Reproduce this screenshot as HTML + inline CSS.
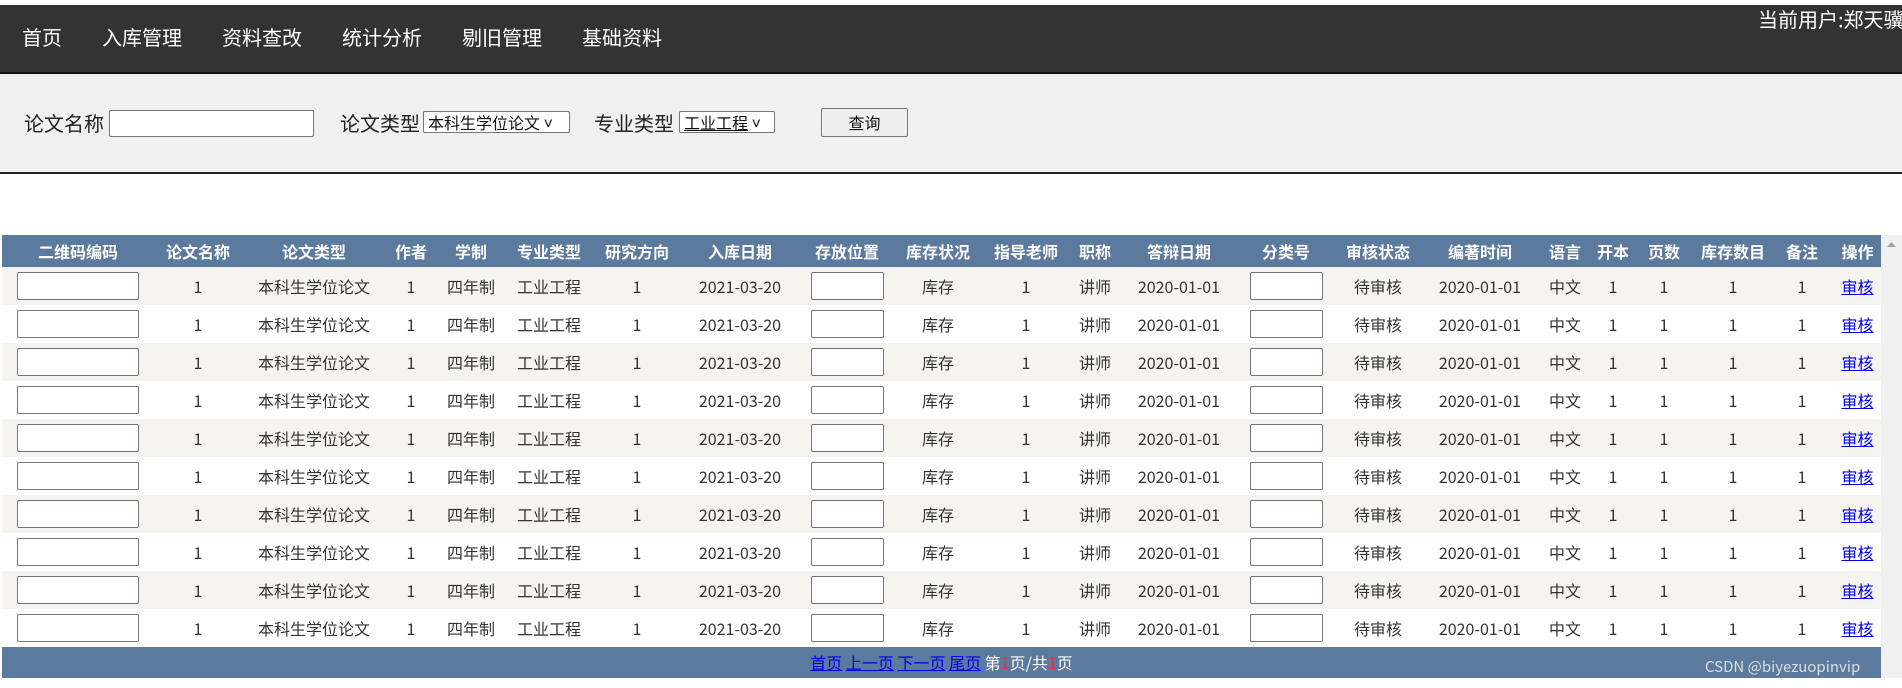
<!DOCTYPE html>
<html><head><meta charset="utf-8">
<style>
*{box-sizing:border-box}
body{margin:0;width:1902px;height:688px;overflow:hidden;background:#fff;font-family:"Noto Sans CJK SC","Liberation Sans",sans-serif;color:#333;position:relative}
.nav{position:absolute;left:0;top:5px;width:1902px;height:69px;background:#333;border-bottom:2px solid #111}
.nav span{position:absolute;top:19px;font-size:20px;color:#fff;line-height:26px}
.user{position:absolute;left:1758px;top:4px;font-size:20px;color:#fff;white-space:nowrap;line-height:30px}
.filter{position:absolute;left:0;top:74px;width:1902px;height:100px;background:#f0f0f0;border-bottom:2px solid #222}
.filter .l{position:absolute;top:35px;font-size:20px;color:#222;line-height:28px}
.inp{position:absolute;background:#fff;border:1px solid #767676;border-radius:2px}
.sel{position:absolute;background:#fff;border:1px solid #767676;border-radius:2px;font-size:16px;line-height:20px;padding-left:4px;color:#111;white-space:nowrap;overflow:hidden}
.btn{position:absolute;left:821px;top:34px;width:87px;height:29px;border:1px solid #767676;border-radius:2px;background:#efefef;font-size:16px;text-align:center;line-height:27px;color:#111}
table{position:absolute;left:2px;top:235px;width:1879px;border-collapse:collapse;table-layout:fixed}
th{background:#5b7a9d;color:#fff;font-weight:bold;font-size:16px;height:32px;padding:0;white-space:nowrap;text-align:center;line-height:20px}
td{height:38px;padding:0;text-align:center;font-size:16px;color:#333;white-space:nowrap;line-height:20px}
tr.g td{background:#f5f4f0}
td .b{display:inline-block;vertical-align:middle;border:1px solid #767676;border-radius:2px;background:#fff;height:28px}
a{color:#0000ee;text-decoration:underline}
.pg{position:absolute;left:2px;top:647px;width:1879px;height:31px;background:#5b7a9d;text-align:center;font-size:16px;line-height:31px;color:#fff}
.pg a{color:#0000ee}
.pg i{font-style:normal;color:#e33}
.sb{position:absolute;left:1881px;top:235px;width:21px;height:443px;background:#f0f0f0}
.wm{position:absolute;left:1705px;top:657px;font-size:15px;color:#ddd;line-height:20px}
</style></head><body>
<div class="nav">
<span style="left:22px">首页</span><span style="left:102px">入库管理</span><span style="left:222px">资料查改</span><span style="left:342px">统计分析</span><span style="left:462px">剔旧管理</span><span style="left:582px">基础资料</span>
</div>
<div class="user">当前用户:郑天骥</div>
<div class="filter">
<span class="l" style="left:24px">论文名称</span><div class="inp" style="left:109px;top:36px;width:205px;height:27px"></div>
<span class="l" style="left:340px">论文类型</span><div class="sel" style="left:423px;top:37px;width:147px;height:22px">本科生学位论文 ˅</div>
<span class="l" style="left:594px">专业类型</span><div class="sel" style="left:679px;top:37px;width:96px;height:22px"><u>工业工程</u> ˅</div>
<div class="btn">查询</div>
</div>
<table>
<colgroup><col style="width:152px"><col style="width:88px"><col style="width:144px"><col style="width:50px"><col style="width:70px"><col style="width:86px"><col style="width:90px"><col style="width:116px"><col style="width:98px"><col style="width:84px"><col style="width:92px"><col style="width:46px"><col style="width:122px"><col style="width:92px"><col style="width:92px"><col style="width:112px"><col style="width:58px"><col style="width:38px"><col style="width:64px"><col style="width:74px"><col style="width:64px"><col style="width:47px"></colgroup>
<tr><th>二维码编码</th><th>论文名称</th><th>论文类型</th><th>作者</th><th>学制</th><th>专业类型</th><th>研究方向</th><th>入库日期</th><th>存放位置</th><th>库存状况</th><th>指导老师</th><th>职称</th><th>答辩日期</th><th>分类号</th><th>审核状态</th><th>编著时间</th><th>语言</th><th>开本</th><th>页数</th><th>库存数目</th><th>备注</th><th>操作</th></tr>
<tr class="g"><td><span class="b" style="width:122px"></span></td><td>1</td><td>本科生学位论文</td><td>1</td><td>四年制</td><td>工业工程</td><td>1</td><td>2021-03-20</td><td><span class="b" style="width:73px"></span></td><td>库存</td><td>1</td><td>讲师</td><td>2020-01-01</td><td><span class="b" style="width:73px"></span></td><td>待审核</td><td>2020-01-01</td><td>中文</td><td>1</td><td>1</td><td>1</td><td>1</td><td><a>审核</a></td></tr>
<tr><td><span class="b" style="width:122px"></span></td><td>1</td><td>本科生学位论文</td><td>1</td><td>四年制</td><td>工业工程</td><td>1</td><td>2021-03-20</td><td><span class="b" style="width:73px"></span></td><td>库存</td><td>1</td><td>讲师</td><td>2020-01-01</td><td><span class="b" style="width:73px"></span></td><td>待审核</td><td>2020-01-01</td><td>中文</td><td>1</td><td>1</td><td>1</td><td>1</td><td><a>审核</a></td></tr>
<tr class="g"><td><span class="b" style="width:122px"></span></td><td>1</td><td>本科生学位论文</td><td>1</td><td>四年制</td><td>工业工程</td><td>1</td><td>2021-03-20</td><td><span class="b" style="width:73px"></span></td><td>库存</td><td>1</td><td>讲师</td><td>2020-01-01</td><td><span class="b" style="width:73px"></span></td><td>待审核</td><td>2020-01-01</td><td>中文</td><td>1</td><td>1</td><td>1</td><td>1</td><td><a>审核</a></td></tr>
<tr><td><span class="b" style="width:122px"></span></td><td>1</td><td>本科生学位论文</td><td>1</td><td>四年制</td><td>工业工程</td><td>1</td><td>2021-03-20</td><td><span class="b" style="width:73px"></span></td><td>库存</td><td>1</td><td>讲师</td><td>2020-01-01</td><td><span class="b" style="width:73px"></span></td><td>待审核</td><td>2020-01-01</td><td>中文</td><td>1</td><td>1</td><td>1</td><td>1</td><td><a>审核</a></td></tr>
<tr class="g"><td><span class="b" style="width:122px"></span></td><td>1</td><td>本科生学位论文</td><td>1</td><td>四年制</td><td>工业工程</td><td>1</td><td>2021-03-20</td><td><span class="b" style="width:73px"></span></td><td>库存</td><td>1</td><td>讲师</td><td>2020-01-01</td><td><span class="b" style="width:73px"></span></td><td>待审核</td><td>2020-01-01</td><td>中文</td><td>1</td><td>1</td><td>1</td><td>1</td><td><a>审核</a></td></tr>
<tr><td><span class="b" style="width:122px"></span></td><td>1</td><td>本科生学位论文</td><td>1</td><td>四年制</td><td>工业工程</td><td>1</td><td>2021-03-20</td><td><span class="b" style="width:73px"></span></td><td>库存</td><td>1</td><td>讲师</td><td>2020-01-01</td><td><span class="b" style="width:73px"></span></td><td>待审核</td><td>2020-01-01</td><td>中文</td><td>1</td><td>1</td><td>1</td><td>1</td><td><a>审核</a></td></tr>
<tr class="g"><td><span class="b" style="width:122px"></span></td><td>1</td><td>本科生学位论文</td><td>1</td><td>四年制</td><td>工业工程</td><td>1</td><td>2021-03-20</td><td><span class="b" style="width:73px"></span></td><td>库存</td><td>1</td><td>讲师</td><td>2020-01-01</td><td><span class="b" style="width:73px"></span></td><td>待审核</td><td>2020-01-01</td><td>中文</td><td>1</td><td>1</td><td>1</td><td>1</td><td><a>审核</a></td></tr>
<tr><td><span class="b" style="width:122px"></span></td><td>1</td><td>本科生学位论文</td><td>1</td><td>四年制</td><td>工业工程</td><td>1</td><td>2021-03-20</td><td><span class="b" style="width:73px"></span></td><td>库存</td><td>1</td><td>讲师</td><td>2020-01-01</td><td><span class="b" style="width:73px"></span></td><td>待审核</td><td>2020-01-01</td><td>中文</td><td>1</td><td>1</td><td>1</td><td>1</td><td><a>审核</a></td></tr>
<tr class="g"><td><span class="b" style="width:122px"></span></td><td>1</td><td>本科生学位论文</td><td>1</td><td>四年制</td><td>工业工程</td><td>1</td><td>2021-03-20</td><td><span class="b" style="width:73px"></span></td><td>库存</td><td>1</td><td>讲师</td><td>2020-01-01</td><td><span class="b" style="width:73px"></span></td><td>待审核</td><td>2020-01-01</td><td>中文</td><td>1</td><td>1</td><td>1</td><td>1</td><td><a>审核</a></td></tr>
<tr><td><span class="b" style="width:122px"></span></td><td>1</td><td>本科生学位论文</td><td>1</td><td>四年制</td><td>工业工程</td><td>1</td><td>2021-03-20</td><td><span class="b" style="width:73px"></span></td><td>库存</td><td>1</td><td>讲师</td><td>2020-01-01</td><td><span class="b" style="width:73px"></span></td><td>待审核</td><td>2020-01-01</td><td>中文</td><td>1</td><td>1</td><td>1</td><td>1</td><td><a>审核</a></td></tr>
</table>
<div class="pg"><a>首页</a> <a>上一页</a> <a>下一页</a> <a>尾页</a> 第<i>1</i>页/共<i>1</i>页</div>
<div class="sb"><svg width="21" height="20"><path d="M6 12 L10.5 7 L15 12Z" fill="#a0a0a0"/></svg></div>
<div class="wm">CSDN @biyezuopinvip</div>
</body></html>
